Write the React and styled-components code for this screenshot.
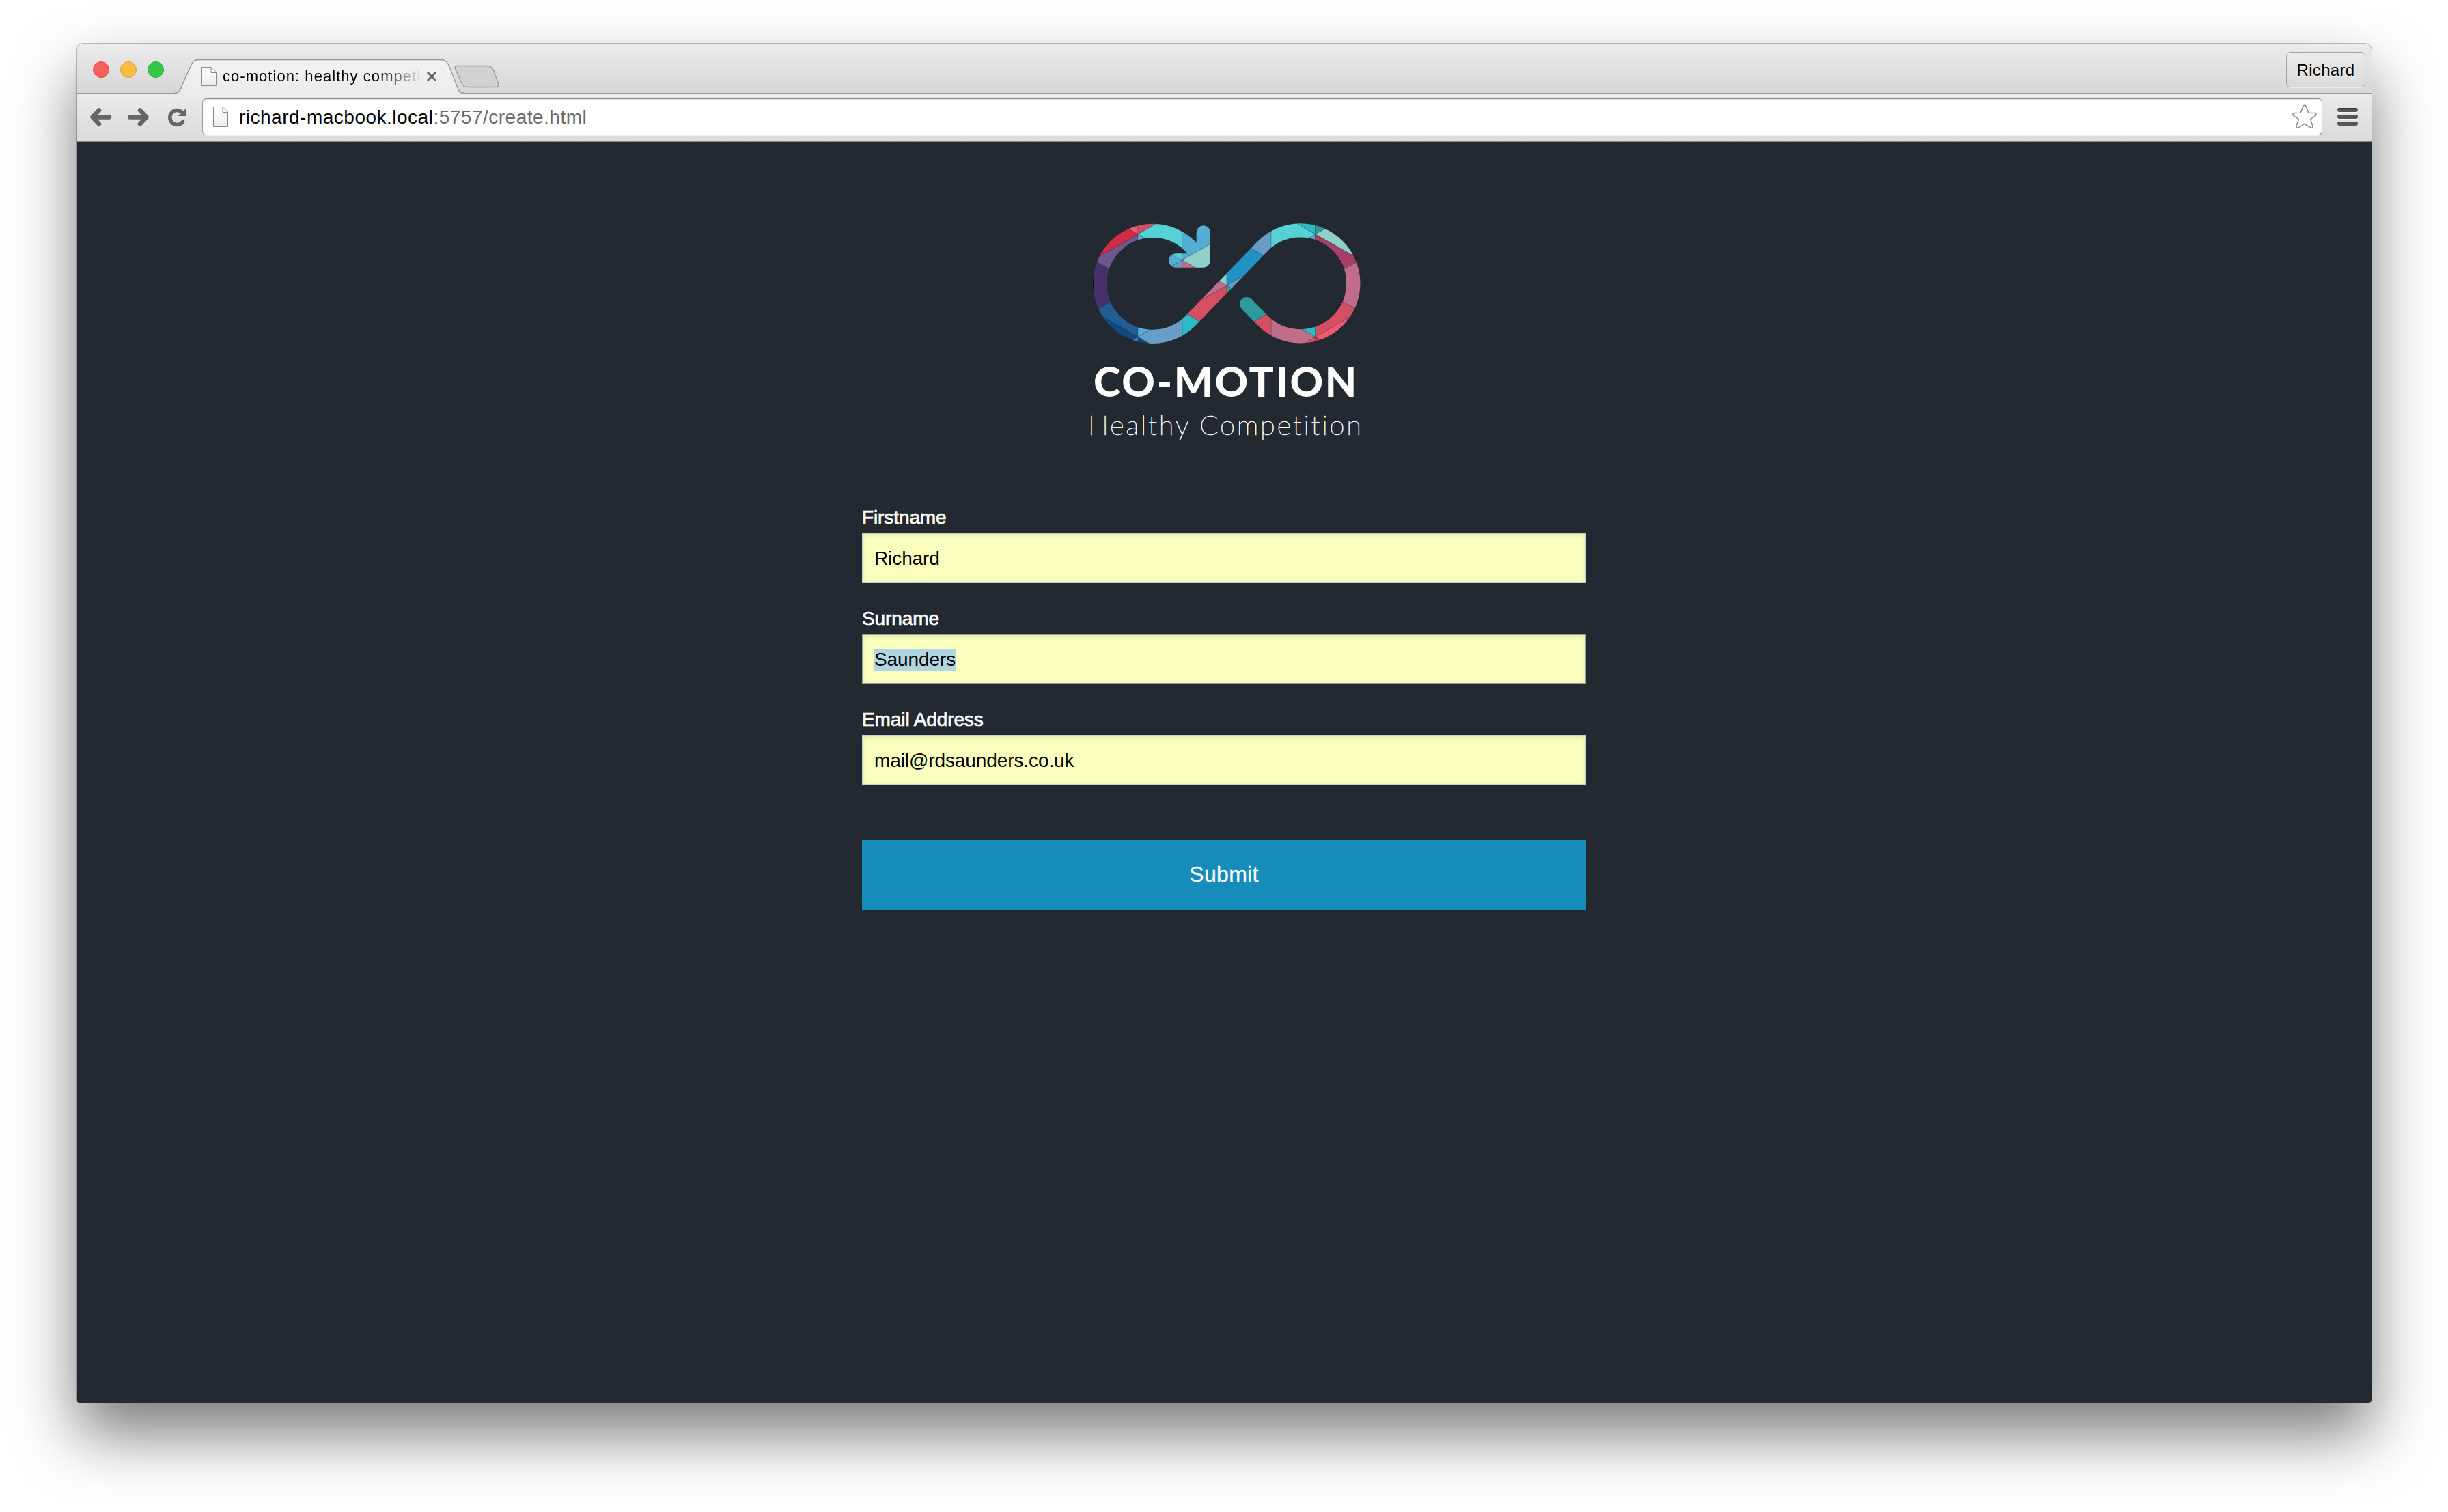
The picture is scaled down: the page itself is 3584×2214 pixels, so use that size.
import React from "react";
import styled, { createGlobalStyle } from "styled-components";

const GlobalStyle = createGlobalStyle`
  * { box-sizing: border-box; }
  body { margin: 0; background: #fff; font-family: "Liberation Sans", Arial, sans-serif; }
`;

const Desktop = styled.div`
  height: 2214px;
  padding: 64px 112px 160px;
  overflow: hidden;
`;

const Window = styled.div`
  display: flex;
  flex-direction: column;
  height: 1990px;
  border-radius: 10px 10px 5px 5px;
  background: #232931;
  box-shadow: 0 0 0 1px rgba(0, 0, 0, 0.24), 0 46px 92px rgba(0, 0, 0, 0.52);
`;

const TabStrip = styled.div`
  display: flex;
  height: 73px;
  border-radius: 10px 10px 0 0;
  border-bottom: 1px solid #999;
  background: linear-gradient(#ececec, #d6d6d6);
  box-shadow: inset 0 1px 0 #f6f6f6;
`;

const TrafficLights = styled.div`
  display: flex;
  gap: 16px;
  padding: 26px 0 0 24px;
  width: 143px;
`;

const Light = styled.span`
  width: 24px;
  height: 24px;
  border-radius: 50%;
  background: ${(p) => p.$fill};
  border: 1px solid ${(p) => p.$edge};
`;

const Tab = styled.div`
  position: relative;
  display: flex;
  width: 420px;
  height: 73px;
  padding: 34px 0 0 40px;
`;

const TabShape = styled.svg`
  position: absolute;
  left: 0;
  top: 0;
`;

const TabTitle = styled.div`
  position: relative;
  flex: none;
  width: 298px;
  margin: 1px 0 0 9px;
  white-space: nowrap;
  font-size: 22px;
  line-height: 26px;
  letter-spacing: 1.05px;
  color: #000;
  mask-image: linear-gradient(90deg, #000 230px, transparent 292px);
`;

const PageIcon = styled.svg`
  position: relative;
  flex: none;
  width: 22px;
  height: ${(p) => p.$h}px;
`;

const CloseIcon = styled.svg`
  position: relative;
  margin: 6px 0 0 0;
  width: 16px;
  height: 16px;
`;

const NewTab = styled.svg`
  margin: 31px 0 0 -10px;
  width: 66px;
  height: 34px;
`;

const Profile = styled.div`
  display: flex;
  justify-content: center;
  width: 116px;
  height: 52px;
  margin: 12px 9px 0 auto;
  padding-top: 12px;
  border: 1px solid #a2a2a2;
  border-radius: 6px;
  background: linear-gradient(#ebebeb, #dadada);
  box-shadow: 0 1px 0 rgba(255, 255, 255, 0.5), inset 0 1px 0 rgba(255, 255, 255, 0.5);
  color: #000;
  font-size: 24px;
  line-height: 28px;
  letter-spacing: 0.3px;
  text-shadow: 0 2px 0 rgba(255, 255, 255, 0.7);
`;

const Toolbar = styled.div`
  display: flex;
  height: 71px;
  padding: 7px 20px 0;
  border-bottom: 1px solid #868686;
  background: linear-gradient(#ebebeb, #dadada);
  box-shadow: inset 0 1px 0 #f5f5f5;
`;

const NavIcons = styled.svg`
  width: 144px;
  height: 44px;
  margin-top: 5px;
`;

const AddressBar = styled.div`
  display: flex;
  align-items: flex-start;
  margin-left: 20px;
  width: 3104px;
  height: 54px;
  border: 1px solid #9b9b9b;
  border-top-color: #868686;
  border-radius: 6px;
  background: #fff;
  box-shadow: inset 0 2px 2px rgba(0, 0, 0, 0.08), 0 1px 0 rgba(255, 255, 255, 0.5);
  padding: 11px 7px 0 15px;
`;

const Url = styled.div`
  flex: 1;
  margin-left: 16px;
  white-space: nowrap;
  font-size: 28px;
  line-height: 32px;
  letter-spacing: 0.5px;
  color: #6b6b6b;
`;

const Host = styled.span`
  color: #000;
`;

const StarIcon = styled.svg`
  width: 36px;
  height: 36px;
  margin-top: -3px;
`;

const MenuButton = styled.div`
  display: flex;
  flex-direction: column;
  gap: 4px;
  margin: 14px 0 0 22px;
`;

const MenuBar = styled.span`
  width: 30px;
  height: 6px;
  border-radius: 3px;
  background: #575757;
  border-top: 1px solid #333;
  box-shadow: 0 1px 0 rgba(255, 255, 255, 0.7);
`;

const Page = styled.main`
  flex: 1;
  display: flex;
  flex-direction: column;
  align-items: center;
  padding-top: 102px;
  border-radius: 0 0 5px 5px;
  background: #232931;
`;

const Brand = styled.header`
  width: 424px;
  height: 332px;
  color: #fff;
  font-family: Lato, "Open Sans", sans-serif;
  white-space: nowrap;
`;

const LogoMark = styled.svg`
  display: block;
  width: 420px;
  height: 210px;
`;

const BrandName = styled.h1`
  margin: 2px 0 0 21px;
  font-size: 60px;
  line-height: 72px;
  font-weight: 900;
  letter-spacing: 2.7px;
`;

const Tagline = styled.p`
  margin: 4px 0 0 13px;
  font-size: 40px;
  line-height: 48px;
  font-weight: 100;
  letter-spacing: 2.7px;
  -webkit-text-stroke: 0.7px #fff;
`;

const Form = styled.form`
  display: flex;
  flex-direction: column;
  gap: 36px;
  width: 1060px;
  margin-top: 100px;
`;

const Field = styled.div`
  display: flex;
  flex-direction: column;
  gap: 6px;
`;

const Label = styled.label`
  font-size: 28px;
  line-height: 32px;
  letter-spacing: -0.1px;
  color: #fff;
  -webkit-text-stroke: 0.7px #fff;
`;

const Control = styled.div`
  height: 74px;
  padding: 20px 16px;
  border: 2px solid ${(p) => (p.$focused ? "#999" : "#ccc")};
  background: #faffbd;
  box-shadow: inset 0 2px 6px rgba(0, 0, 0, 0.1);
  font-size: 28px;
  line-height: 32px;
  letter-spacing: -0.1px;
  color: #000;
`;

const Selected = styled.span`
  display: inline-block;
  height: 32px;
  background: #b0d5e3;
`;

const Submit = styled.button`
  height: 102px;
  margin: 44px 0 0;
  padding: 0 0 2px;
  border: 0;
  background: #158cba;
  color: #fff;
  font-family: inherit;
  font-size: 32px;
  letter-spacing: 0.3px;
  -webkit-text-stroke: 0.3px #fff;
`;

const FACETS = [
  ["#47306e", "50,206 140,254 145,392 50,446"],
  ["#0b0a14", "50,262 63,262 63,370 50,370"],
  ["#6c588e", "60,213 140,254 258,150 258,99"],
  ["#d42a45", "60,213 258,99 205,68 80,68"],
  ["#ef5a70", "205,68 258,99 258,40"],
  ["#d44f64", "258,40 258,99 355,43"],
  ["#52afd3", "258,99 258,130 310,130"],
  ["#56d1d3", "258,99 355,43 452,43 452,170 310,130"],
  ["#52afd3", "452,43 600,43 600,128 452,212"],
  ["#8ed0c8", "452,212 600,128 600,260 534,260"],
  ["#c06d8c", "452,212 534,260 452,260"],
  ["#6a9cc8", "452,212 452,260 370,260"],
  ["#52afd3", "452,212 370,260 370,162"],
  ["#56d1d3", "452,212 452,176 385,176"],
  ["#215d92", "50,446 145,392 258,480 258,550 60,436"],
  ["#0f4a82", "60,436 258,550 220,572 60,572"],
  ["#3f7cc0", "258,550 220,572 258,590"],
  ["#0f4a82", "258,550 258,590 327,590"],
  ["#52afd3", "258,490 258,550 345,500"],
  ["#6a9cc8", "258,550 345,500 453,450 453,590 327,590"],
  ["#2bbbc7", "453,437 545,491 453,590"],
  ["#d44f64", "453,437 545,491 648,400 648,324 510,402"],
  ["#c06d8c", "510,402 648,324 590,290"],
  ["#8ed0c8", "590,290 648,324 648,240"],
  ["#2192c4", "648,240 735,150 828,203 735,274 648,324"],
  ["#6a9cc8", "648,324 735,274 680,343"],
  ["#2d9aa0", "648,324 680,343 648,370"],
  ["#6a9cc8", "735,150 828,203 843,190 843,60"],
  ["#56d1d3", "843,43 943,43 1037,99 990,126 843,190"],
  ["#6a9cc8", "1037,99 1037,135 990,126"],
  ["#2bbbc7", "943,43 1037,99 1037,40"],
  ["#2d9aa0", "1037,99 1037,40 1110,58"],
  ["#8ed0c8", "1037,99 1110,58 1230,100 1230,208"],
  ["#a83f68", "1037,99 1037,140 1150,259 1240,211 1230,208"],
  ["#c06d8c", "1150,259 1240,211 1240,441 1150,391"],
  ["#d44f64", "1037,480 1150,391 1225,433 1225,442 1037,550"],
  ["#ef5a70", "1037,550 1225,442 1225,590 1107,590"],
  ["#d42a45", "1037,550 1107,590 1037,590"],
  ["#d44f64", "1037,550 1037,590 970,590"],
  ["#2bbbc7", "1037,550 1037,490 950,500"],
  ["#c06d8c", "843,430 950,500 1037,550 970,590 843,590"],
  ["#d44f64", "843,438 760,486 843,590"],
  ["#2d9aa0", "690,360 800,360 843,438 755,489 690,440"],
  ["#6a9cc8", "736,373 770,370 762,392"],
];

const FIELDS = [
  { label: "Firstname", value: "Richard" },
  { label: "Surname", value: "Saunders", selected: true },
  { label: "Email Address", value: "mail@rdsaunders.co.uk" },
];

function Document({ h }) {
  return (
    <PageIcon $h={h} viewBox={`0 0 22 ${h}`}>
      <defs>
        <linearGradient id={`doc${h}`} x2="0" y2="1">
          <stop stopColor="#fff" />
          <stop offset="1" stopColor="#ececec" />
        </linearGradient>
      </defs>
      <path d={`M.5 .5H14L21.5 8V${h - 0.5}H.5Z`} fill={`url(#doc${h})`} stroke="#8c8c8c" />
      <path d="M14 .5V8.5H21.5" fill="#fff" stroke="#8c8c8c" />
    </PageIcon>
  );
}

function Logo() {
  return (
    <LogoMark viewBox="0 0 1260 630">
      <mask id="ribbon" maskUnits="userSpaceOnUse" x="0" y="0" width="1260" height="630">
        <g fill="none" stroke="#fff" strokeWidth="61" strokeLinecap="round" strokeLinejoin="round">
          <path d="M735.5 405.5L805.6 477.5A232.5 232.5 0 1 0 805.6 151.6L487.4 480.4A232.5 232.5 0 1 1 487.4 151.6L545 213" />
          <path d="M545.5 91.5V214.5H423.5" />
        </g>
      </mask>
      <g mask="url(#ribbon)">
        {FACETS.map(([fill, points], i) => (
          <polygon key={i} points={points} fill={fill} stroke="#1b3040" strokeOpacity="0.45" strokeWidth="1.6" />
        ))}
      </g>
    </LogoMark>
  );
}

export default function App() {
  return (
    <Desktop>
      <GlobalStyle />
      <Window>
        <TabStrip>
          <TrafficLights>
            <Light $fill="#fc605c" $edge="#df4744" />
            <Light $fill="#fdbc40" $edge="#de9f34" />
            <Light $fill="#34c84a" $edge="#27aa35" />
          </TrafficLights>
          <Tab>
            <TabShape width="424" height="73" viewBox="0 0 424 73">
              <defs>
                <linearGradient id="tabFill" x2="0" y2="1">
                  <stop stopColor="#f2f2f2" />
                  <stop offset="1" stopColor="#ebebeb" />
                </linearGradient>
              </defs>
              <path
                d="M0 74V72.5C8 72.5 9 68 12 60L24 33C27 26 29 23.500 37 23.500H391C397 23.500 400 27 403 34L414 62C417 70 418 72.500 424 72.500V74Z"
                fill="url(#tabFill)"
              />
              <path
                d="M0 72.500C8 72.500 9 68 12 60L24 33C27 26 29 23.500 37 23.500H391C397 23.500 400 27 403 34L414 62C417 70 418 72.500 424 72.500"
                fill="none"
                stroke="#929292"
                strokeWidth="1.3"
              />
            </TabShape>
            <Document h={28} />
            <TabTitle>co-motion: healthy competi</TabTitle>
            <CloseIcon viewBox="0 0 16 16">
              <path d="M2 2L14 14M14 2L2 14" stroke="#666" strokeWidth="3" />
            </CloseIcon>
          </Tab>
          <NewTab viewBox="0 0 66 34">
            <path
              d="M4 1.500H48C54 1.500 56 4 58 9L64 26C65.500 30 65 32.500 60 32.500H20C14 32.500 12 30 10 25L2 7C.5 3.500 1 1.500 4 1.500Z"
              fill="#d2d2d2"
              stroke="#999"
              strokeWidth="1.3"
            />
          </NewTab>
          <Profile>Richard</Profile>
        </TabStrip>
        <Toolbar>
          <NavIcons viewBox="132 149 144 44">
            <g fill="none" stroke="#666" strokeWidth="6.500" strokeLinecap="round">
              <path d="M160 171.500H137M145 161.500L135.500 171.500L145 181.500" strokeLinejoin="round" />
              <path d="M190 171.500H213M205 161.500L214.500 171.500L205 181.500" strokeLinejoin="round" />
              <path d="M267.500 178.500A10.500 10.500 0 1 1 265.500 163.500" strokeWidth="5.500" />
            </g>
            <path d="M273 158V170H261Z" fill="#666" />
          </NavIcons>
          <AddressBar>
            <Document h={30} />
            <Url>
              <Host>richard-macbook.local</Host>:5757/create.html
            </Url>
            <StarIcon viewBox="0 0 36 36">
              <path
                d="M15.600 3C16.500 .8 19.500 .8 20.400 3L23.800 12.200L33 12.600C35.200 12.800 35.800 15 34.200 16.300L26.600 21.700L30 31.500C30.500 33.800 28.800 35 27 33.900L18 28.300L9 33.900C7.200 35 5.500 33.800 6 31.500L9.400 21.700L1.800 16.300C.2 15 .8 12.800 3 12.600L12.200 12.200Z"
                fill="#fff"
                stroke="#888"
                strokeWidth="1.500"
              />
            </StarIcon>
          </AddressBar>
          <MenuButton>
            <MenuBar />
            <MenuBar />
            <MenuBar />
          </MenuButton>
        </Toolbar>
        <Page>
          <Brand>
            <Logo />
            <BrandName>CO-MOTION</BrandName>
            <Tagline>Healthy Competition</Tagline>
          </Brand>
          <Form>
            {FIELDS.map((f) => (
              <Field key={f.label}>
                <Label>{f.label}</Label>
                <Control $focused={f.selected}>
                  {f.selected ? <Selected>{f.value}</Selected> : f.value}
                </Control>
              </Field>
            ))}
            <Submit type="button">Submit</Submit>
          </Form>
        </Page>
      </Window>
    </Desktop>
  );
}
